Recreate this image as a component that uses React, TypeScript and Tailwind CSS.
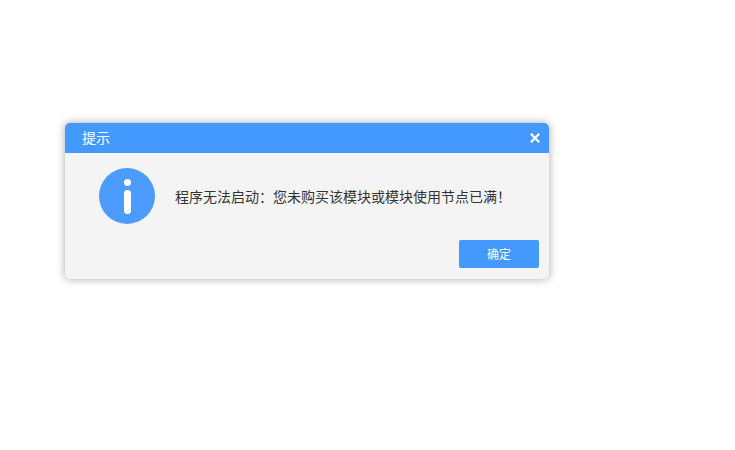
const cjk = "font-['Noto_Sans_CJK_SC','Liberation_Sans',sans-serif]";

function InfoIcon() {
  return (
    <svg width="56" height="56" viewBox="0 0 56 56" className="shrink-0">
      <circle cx="28" cy="28" r="28" fill="#4c9bff" />
      <circle cx="28.5" cy="14.5" r="3.6" fill="#fff" />
      <rect x="25" y="22" width="7" height="24" rx="3.5" fill="#fff" />
    </svg>
  );
}

function CloseIcon() {
  return (
    <svg width="10" height="10" viewBox="0 0 10 10">
      <path d="M0.8 0.8L9.2 9.2M9.2 0.8L0.8 9.2" stroke="#fff" strokeWidth="2.2" />
    </svg>
  );
}

export default function App() {
  return (
    <div className={`h-[450px] w-[735px] overflow-hidden bg-white pl-[65px] pt-[123px] ${cjk}`}>
      <div className="h-[156px] w-[484px] overflow-hidden rounded-[5px] bg-[#f4f4f4] shadow-[0_0_8px_rgba(0,0,0,0.35)]">
        <div className="flex h-[30px] items-center justify-between bg-[#4499ff] pl-[17px] pr-[9px]">
          <span className="-mt-0.5 text-sm leading-[30px] text-white">提示</span>
          <CloseIcon />
        </div>
        <div className="flex items-center pl-[34px] pt-[15px]">
          <InfoIcon />
          <p className="ml-5 text-sm leading-5 text-[#333]">程序无法启动：您未购买该模块或模块使用节点已满！</p>
        </div>
        <div className="flex justify-end pr-[10px] pt-4">
          <button className="h-7 w-20 rounded-[2px] bg-[#4499ff] text-xs text-white">确定</button>
        </div>
      </div>
    </div>
  );
}
